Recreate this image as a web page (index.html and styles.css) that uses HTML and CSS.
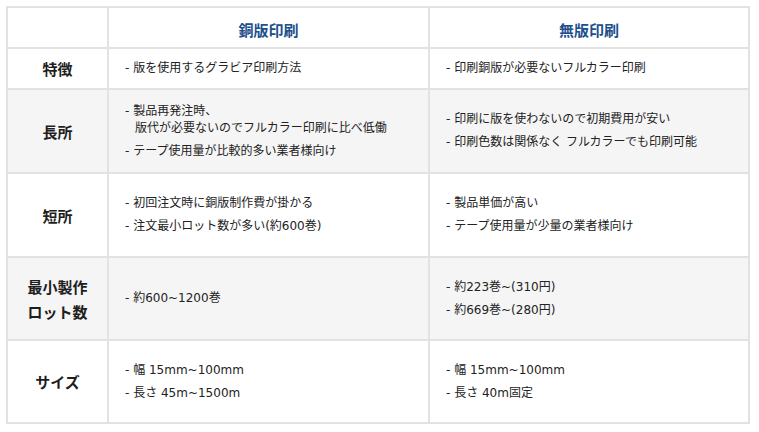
FILE: index.html
```html
<!DOCTYPE html>
<html lang="ja">
<head>
<meta charset="utf-8">
<title>銅版印刷と無版印刷</title>
<link rel="stylesheet" href="styles.css">
</head>
<body>
<div class="table">
  <div class="cell head"></div>
  <div class="cell head">銅版印刷</div>
  <div class="cell head">無版印刷</div>

  <div class="cell label">特徴</div>
  <div class="cell body"><p class="item">- 版を使用するグラビア印刷方法</p></div>
  <div class="cell body"><p class="item">- 印刷銅版が必要ないフルカラー印刷</p></div>

  <div class="cell label gray">長所</div>
  <div class="cell body gray">
    <p class="item">- 製品再発注時、<br>版代が必要ないのでフルカラー印刷に比べ低働</p>
    <p class="item">- テープ使用量が比較的多い業者様向け</p>
  </div>
  <div class="cell body gray">
    <p class="item">- 印刷に版を使わないので初期費用が安い</p>
    <p class="item">- 印刷色数は関係なく フルカラーでも印刷可能</p>
  </div>

  <div class="cell label">短所</div>
  <div class="cell body">
    <p class="item">- 初回注文時に銅版制作費が掛かる</p>
    <p class="item">- 注文最小ロット数が多い(約600巻)</p>
  </div>
  <div class="cell body">
    <p class="item">- 製品単価が高い</p>
    <p class="item">- テープ使用量が少量の業者様向け</p>
  </div>

  <div class="cell label gray">最小製作<br>ロット数</div>
  <div class="cell body gray">
    <p class="item">- 約600~1200巻</p>
  </div>
  <div class="cell body gray">
    <p class="item">- 約223巻~(310円)</p>
    <p class="item">- 約669巻~(280円)</p>
  </div>

  <div class="cell label">サイズ</div>
  <div class="cell body">
    <p class="item">- 幅 15mm~100mm</p>
    <p class="item">- 長さ 45m~1500m</p>
  </div>
  <div class="cell body">
    <p class="item">- 幅 15mm~100mm</p>
    <p class="item">- 長さ 40m固定</p>
  </div>
</div>
</body>
</html>
```

FILE: styles.css
```css
html, body {
  margin: 0;
  padding: 0;
  background: #ffffff;
}

body {
  padding: 6px 0 0 6px;
  font-family: "DejaVu Sans", "Noto Sans CJK JP", sans-serif;
  color: #222222;
}

.table {
  display: grid;
  grid-template-columns: 99px 319px 318px;
  grid-template-rows: 39px 39px 82px 82px 81px 81px;
  gap: 2px;
  padding: 2px;
  width: 740px;
  background: #e2e2e2;
}

.cell {
  background: #ffffff;
  display: flex;
  flex-direction: column;
  justify-content: center;
}

.cell.gray {
  background: #f5f5f5;
}

.head {
  align-items: center;
  font-family: "Noto Sans CJK JP", sans-serif;
  font-weight: bold;
  font-size: 15px;
  color: #1c4f8b;
  padding-top: 4px;
}

.label {
  align-items: center;
  text-align: center;
  font-family: "Noto Sans CJK JP", sans-serif;
  font-weight: bold;
  font-size: 15px;
  line-height: 25px;
  color: #1e1e1e;
}

.body {
  padding-left: 16px;
  font-size: 12px;
}

.item {
  margin: 3px 0;
  line-height: 17px;
  padding-left: 10px;
  text-indent: -10px;
}
```
